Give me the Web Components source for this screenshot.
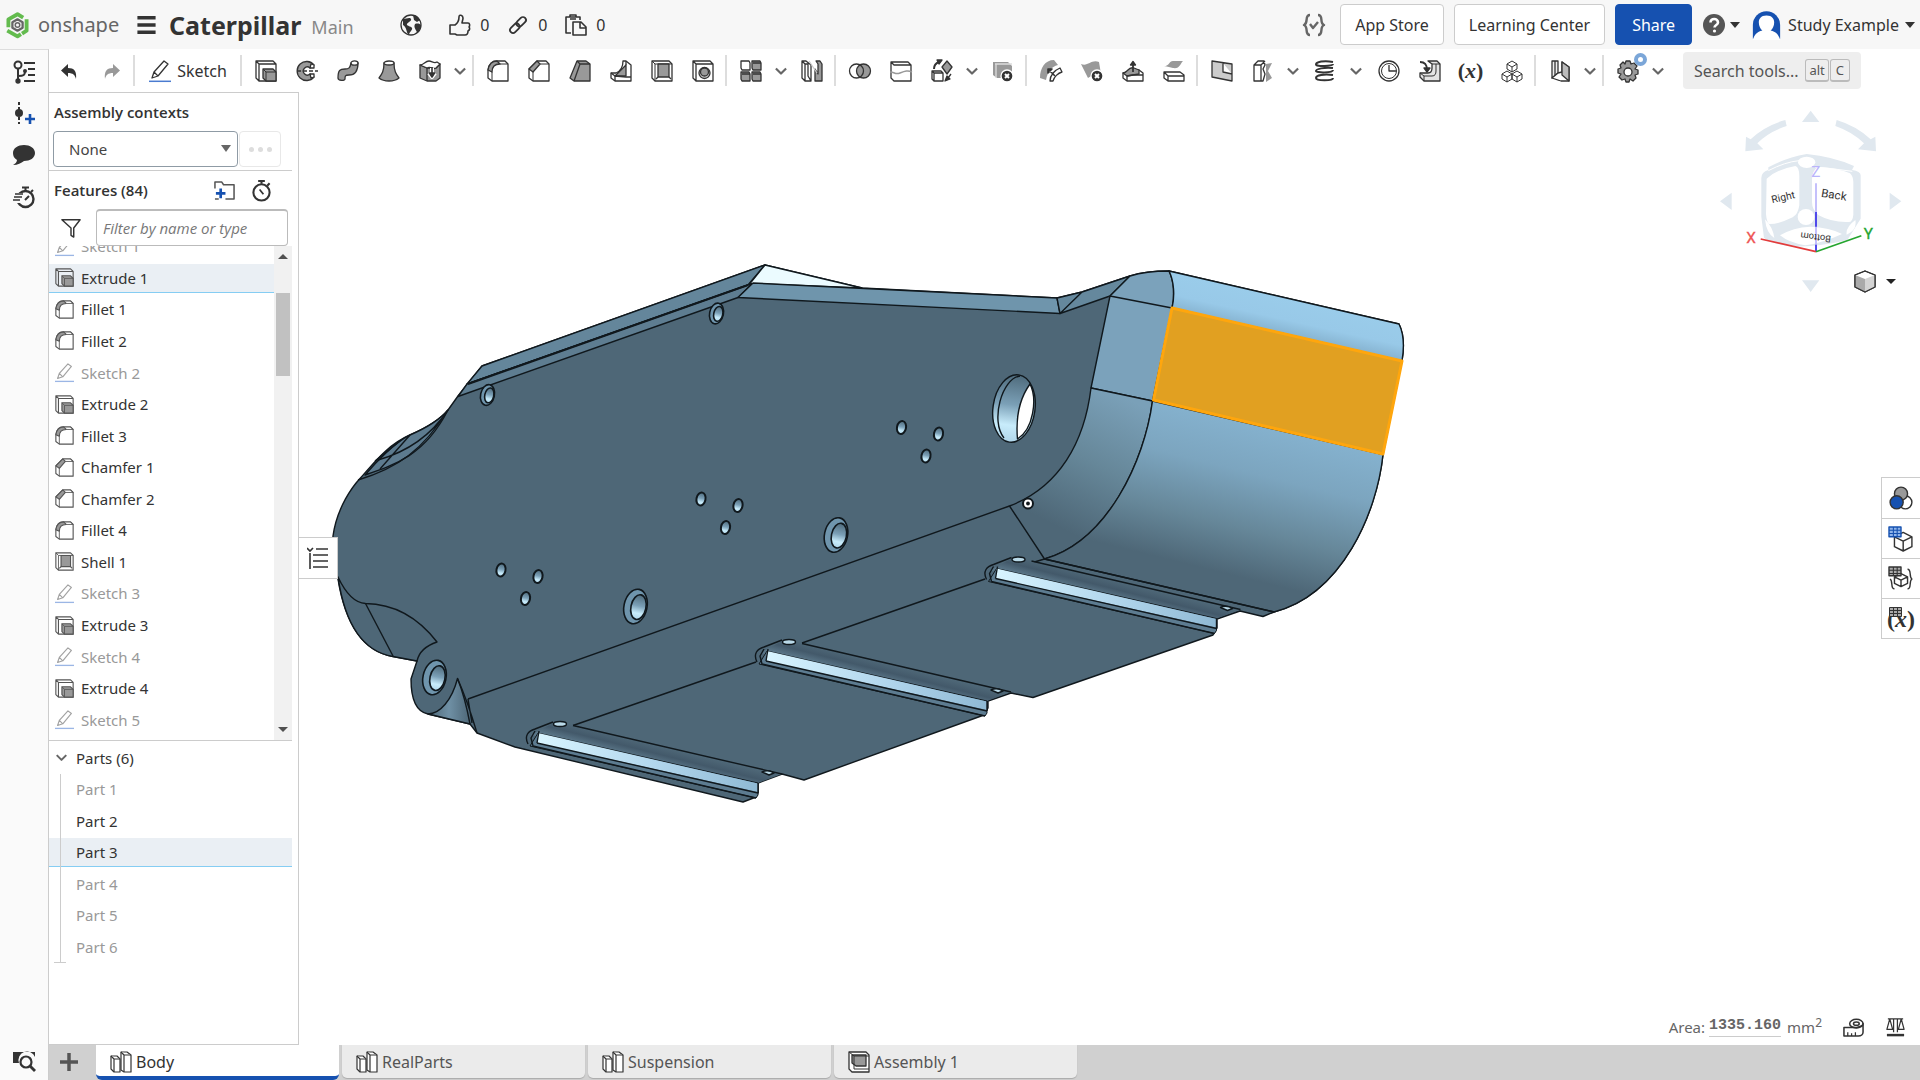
<!DOCTYPE html>
<html lang="en">
<head>
<meta charset="utf-8">
<title>Caterpillar | Main</title>
<style>
html,body{margin:0;height:100%}
body{font:16px/20px "Noto Sans","Open Sans",sans-serif;color:#333;background:#fff;overflow:hidden}
</style>
</head>
<body>
<cad-app></cad-app>
<script>
const G='#999',D='#333';
const ICONS={
undo:`<path d="M9 4v4c6 0 9 3 8 11-1-4-3-6-8-6v4L2 10.500z" fill="${D}" stroke="none"/>`,
redo:`<path d="M13 4v4c-6 0-9 3-8 11 1-4 3-6 8-6v4l7-6.500z" fill="${G}" stroke="none"/>`,
sketch:`<path d="M3 18l2-6L15 1l4 3L9 16zM5 12l4 4"/><path d="M0 21.300h22" stroke="#4a7bd0" stroke-width="1.500"/>`,
extrude:`<path d="M1 1h17l3 3v17H4l-3-3zM1 1l3 3h17M4 4v17"/><path d="M8 9h10l3 3v9H11l-3-3z" fill="${G}"/><path d="M8 9l3 3h10M11 12v9" stroke-width="1"/>`,
revolve:`<path d="M18 5A9.500 9.500 0 1 0 18 17L14 14A4 4 0 1 1 14 8z" fill="${G}"/><path d="M14 8l1-4 3 1v3zM14 14l1 4 3-1v-3z" fill="#fff"/><path d="M1 11h21" stroke-dasharray="4 2"/>`,
sweep:`<path d="M1 18c0-8 2-9 7-9 4 0 5-1 6-6h7c0 8-3 12-9 12-4 0-4 1-4 4 0 2-7 2-7-1z" fill="${G}"/><ellipse cx="17.500" cy="3" rx="3.500" ry="2.200" fill="#fff"/>`,
loft:`<path d="M6 3c0 8-2 11-5 15 5 4 15 4 20 0-3-4-5-7-5-15z" fill="${G}"/><ellipse cx="11" cy="3" rx="5" ry="2" fill="#fff"/>`,
thicken:`<path d="M1 5v13l7 3h9l4-3V4l-4 4H8z" fill="${G}"/><path d="M1 5c4 0 5-4 9-4 3 0 5 3 8 1l3 2-4 4c-3 2-5-2-9 0z" fill="#fff"/><path d="M8 8v13"/><path d="M13 8v8M10 13l3 4 3-4" stroke="#fff" stroke-width="4"/><path d="M13 7v9M10.500 13l2.500 4 2.500-4z" fill="${D}" stroke-width="1.600"/>`,
fillet:`<path d="M1 10C2 4 5 1 10 1h8l3 3v17H5l-4-3z"/><path d="M1 10c1-6 4-9 9-9l3 3c-5 0-8 3-8 8z" fill="${G}"/><path d="M13 4h8M5 12v9M18 1l3 3" stroke-width="1"/>`,
chamfer:`<path d="M1 9l8-8h9l3 3v17H5l-4-3z"/><path d="M1 9l8-8 3 3-7 8z" fill="${G}"/><path d="M12 4h9M5 12v9M18 1l3 3" stroke-width="1"/>`,
draft:`<path d="M8 1h9l4 3v17H5l-4-3z" fill="${G}"/><path d="M8 1l3 3h10M11 4L5 21"/>`,
rib:`<path d="M16 1l5 4v16H5l-4-3 0-5 5 0C11 11 13 7 13 1z" fill="#fff"/><path d="M5 16L16 5v11z" fill="${G}"/><path d="M1 13l4 3v5M5 16l11 1h5M16 5V1"/>`,
shell:`<path d="M1 1h17l3 3v17H4l-3-3z"/><path d="M1 1l3 3v17M4 4h17" stroke-width="1"/><path d="M7 4h11v13H7z" fill="${G}"/><path d="M7 17l-2 2M18 17l2 2"/>`,
hole:`<path d="M1 1h17l3 3v17H4l-3-3zM1 1l3 3h17M4 4v17"/><circle cx="12.500" cy="13" r="5.500" fill="#ccc"/><circle cx="12.500" cy="12" r="4" fill="${G}"/>`,
pattern:`<path d="M1 1h8l1 2v7H2l-1-2z"/><g fill="${G}"><path d="M12 1h8l1 2v7h-8l-1-2zM1 12h8l1 2v7H2l-1-2zM12 12h8l1 2v7h-8l-1-2z"/></g><path d="M13 3h8M2 14h8M13 14h8"/>`,
mirror:`<path d="M1 1h4l5 4v16H4l-3-3zM1 1l3 3v17M4 4h3v12l3 5"/><path d="M14 21V9l3 5V4l-2-3h4l2 3v17z" fill="${G}"/><path d="M8 1l8 12" stroke="#ccc"/>`,
boolean:`<circle cx="14.500" cy="11" r="7" fill="${G}"/><circle cx="7.500" cy="11" r="7"/>`,
split:`<path d="M1 2h17l3 3v16H4l-3-3zM1 2l3 3h17"/><path d="M0 12c5 0 5 3 10 1s8-3 12-1" stroke="${G}" stroke-width="1.500"/>`,
transform:`<path d="M1 11h9l2 2v8H3l-2-2zM1 11l2 2h9M3 13v8"/><path d="M16 1l5 6-5 7-5-7z" fill="${G}"/><path d="M3 9c0-4 2-6 5-7" stroke-width="2"/><path d="M6 0l5 0-3 4zM14 21l2-5 3 3zM20 14l-3 4" fill="${D}"/>`,
delpart:`<path d="M1 2h15l4 4v12H5l-4-3z" fill="${G}" stroke="none"/><path d="M3 4h17M4 4v14" stroke="#ddd"/><circle cx="15" cy="16" r="6" fill="${D}" stroke="#fff"/><path d="M13 14l4 4M17 14l-4 4" stroke="#fff" stroke-width="2"/>`,
modfillet:`<path d="M0 18C0 8 5 0 14 0l4 5C11 7 8 11 6 20z" fill="${G}" stroke="none"/><path d="M10 21c0-6 5-11 10-13l2 4c-4 1-8 5-9 9z" fill="#fff"/><path d="M15 16L9 10M8 13V9h4z" fill="${D}" stroke-width="1.600"/>`,
delface:`<path d="M0 4c7 3 10-5 18-2l2 12c-6-1-9 2-13 4z" fill="${G}" stroke="none"/><circle cx="16" cy="16" r="6" fill="${D}" stroke="#fff"/><path d="M14 14l4 4M18 14l-4 4" stroke="#fff" stroke-width="2"/>`,
moveface:`<path d="M1 13v5l4 3h16v-8l-4-3H9z"/><path d="M1 13c5 0 5-7 11-5l5 2 0 4-12 2z" fill="${G}"/><path d="M5 16v5M5 16l6-1h10"/><path d="M11 12V4" stroke-width="1.800"/><path d="M8.500 5L11 1.500 13.500 5z" fill="${D}"/>`,
replace:`<path d="M1 12h16l4 3v6H5l-4-3zM1 12l4 4h16M5 16v5"/><path d="M1 6c6 0 5-6 10-5l9 0c-3 3-3 8-10 7-3-1-5-1-9-2z" fill="${G}" stroke="none"/>`,
plane:`<path d="M1 1l20 3v17L1 17zM12 3v9l9 2" fill="#ccc"/>`,
surface:`<path d="M2 5l4-4h6l1 4-2 4 2 5-2 7H2zM2 5h7l4-4M9 5v16"/><path d="M14 4l6-1-4 8 4 7-6 4z" fill="${G}" stroke="none"/>`,
helix:`<path d="M20 2C11 0 3 2 3 4.500S20 6 20 4M20 8C11 7 3 9 3 11s17 2 17-1M20 15c-9-1-17 0-17 3s17 3 17 0" stroke-width="2"/>`,
curve:`<circle cx="11" cy="11" r="10"/><circle cx="11" cy="11" r="7.500" stroke-width="1"/><path d="M11 5v6h7" />`,
derive:`<path d="M9 1h9l3 3v17H5l-4-4v-4h8c3 0 4-2 4-5V4z" fill="#e4e4e4"/><path d="M13 4h8M1 13l4 3h8c3 0 4-2 4-5V4M5 16v5" stroke-width="1"/><path d="M1 2c5 0 7 3 7 8" stroke-width="1.800"/><path d="M5 8l3 4 3-4z" fill="${D}"/>`,
cubes:`<path d="M11 1l5 3v5l-5 3-5-3V4zM6 4l5 3 5-3M11 7v5M6 11l5 3v5l-5 3-5-3v-5zM1 14l5 3 5-3M6 17v5M16 11l5 3v5l-5 3-5-3v-5zM11 14l5 3 5-3M16 17v5" stroke-width="1"/>`,
sheet:`<path d="M3 1h6v12l-6 5z" fill="#eee"/><path d="M6 1v15"/><path d="M3 18l6-5 4-1V2l7 5v14h-8z" fill="#fff"/><path d="M13 2l7 5v14l-7-6z" fill="#bbb"/>`,
gear:`<path d="M9 1h4l1 3 3-1 3 3-2 3 3 1v4l-3 1 1 3-3 3-3-2-1 3H9l-1-3-3 1-3-3 2-3-3-1v-4l3-1-1-3 3-3 2 2z" fill="${G}"/><circle cx="11" cy="12" r="4" fill="#fff"/>`,
globe:`<circle cx="11" cy="11" r="10"/><path d="M3 5c3 0 7-2 8 0s-3 3-4 5 4 2 5 4-3 4-3 7C6 19 7 13 3 11zM13 1c4 0 6 3 7 5l-3 2-3-2zM15 10c3-1 5 0 6 1 0 4-2 6-4 8 0-3-4-5-2-9z" fill="${D}" stroke="none"/>`,
thumb:`<path d="M1 11h5c3-2 4-5 4-8 0-3 4-2 4 1 0 2-1 4-1 5h6c2 0 2 3 1 4 1 1 1 3-1 4 0 3-1 4-3 4H8l-2-1H1z" stroke-width="1.600"/>`,
link:`<g transform="rotate(45 11 11)" stroke-width="1.800"><rect x="8" y="1" width="6" height="11" rx="3"/><rect x="8" y="10" width="6" height="11" rx="3"/></g>`,
clip:`<path d="M6 19H1V3h14v3M5 3V1h6v2M5 5h6" stroke-width="1.600"/><path d="M8 8h8l5 5v8H8zM15 8v6h6" stroke-width="1.600"/>`,
braces:`<g stroke="#666" stroke-width="2.400"><path d="M7 1C1 1 6 9 1 11c5 2 0 10 6 10M15 1c6 0 1 8 6 10-5 2 0 10-6 10"/><path d="M7 10l3 4 5-6"/></g>`,
help:`<circle cx="11" cy="11" r="11" fill="#555" stroke="none"/><path d="M7.500 8.500c0-5 7.500-4.500 7.500 0 0 2.500-3.500 2.500-3.500 5" stroke="#fff" stroke-width="2.600"/><circle cx="11.500" cy="17" r="1.600" fill="#fff" stroke="none"/>`,
user:`<path d="M1 21V11a10 10 0 0 1 20 0v10z" fill="#1651b0" stroke="none"/><path d="M11 4c8 0 6 9 3 11 4 1 6 3 7 7H1c1-4 3-6 7-7-3-2-5-11 3-11z" fill="#fff" stroke="none"/>`,
tree:`<circle cx="5" cy="4" r="3.500" stroke-width="2"/><path d="M5 8v12M5 15c6 0 7-1 7-5M11 2h11M15 8h7M15 14h7M11 20h11" stroke-width="2"/><circle cx="5" cy="20" r="2" fill="${D}"/><circle cx="12" cy="10" r="2" fill="${D}" stroke="none"/>`,
version:`<path d="M6 0v22" stroke-width="2" stroke-dasharray="3 2"/><circle cx="6" cy="11" r="4" fill="${D}" stroke="none"/><path d="M17 12v10M12 17h10" stroke="#1651b0" stroke-width="2.600"/>`,
comment:`<path d="M11 1c6 0 11 3 11 8s-5 8-11 8c-3 2-6 4-11 4 2-1 4-3 4-5-3-2-4-4-4-7 0-5 5-8 11-8z" fill="${D}" stroke="none"/>`,
perf:`<circle cx="12.500" cy="13" r="8" stroke-width="2.400"/><path d="M12.500 5V1M9 1.500h7M18 6l2-2M12 14l4-4" stroke-width="2"/><path d="M3 7h6v10H1v-8z" fill="#fafafa" stroke="none"/><path d="M2 8h8M1 11h8M0 14h7" stroke-width="1.400"/>`,
timer:`<circle cx="11" cy="13" r="8.500" stroke-width="2.200"/><path d="M11 4V1M7.500 1h7M17 6l2.500-2.500" stroke-width="2.200"/><path d="M9 10l4 5" stroke-width="1.800"/>`,
folder:`<path d="M1 9V2h7l2 3h11v15H12M1 20h4" stroke="#555" stroke-width="1.600"/><path d="M7 9v10M2 14h10" stroke="#1651b0" stroke-width="2.800"/>`,
funnel:`<path d="M1 2h20l-7 9v10l-3-2v-8z" stroke-width="1.600"/>`,
zoomsheet:`<path d="M0 1h22v5A8 8 0 0 0 6 12H0z" fill="${D}" stroke="none"/><circle cx="13" cy="11" r="5.500" stroke-width="2.200" fill="#fafafa"/><path d="M17 15l5 5" stroke-width="2.800"/>`,
plus:`<path d="M11 2v18M2 11h18" stroke="#555" stroke-width="3.500"/>`,
part:`<g fill="#fff" stroke-width="1.200"><path d="M1 5h6l3 3v13H4l-3-3z"/><path d="M1 5l3 3h6M4 8v13"/><path d="M11 1h6l4 3v17h-7l-3-2z"/><path d="M11 1l3 3h7M14 4v17"/></g>`,
asm:`<path d="M1 1h17l3 3v17H4l-3-3z" fill="#fff"/><path d="M4 4h14v11H8l-4-3z" fill="${G}"/><path d="M1 1l5 4M6 5v13h15M6 5h15" stroke-width="1"/>`,
tape:`<path d="M1 12h13c3 0 7-2 7-4v9c0 2-2 4-5 4H1z" stroke-width="1.600"/><ellipse cx="14" cy="8" rx="7" ry="4.500" stroke-width="1.600"/><ellipse cx="14" cy="8" rx="3" ry="1.800" stroke-width="1.600"/><path d="M5 21v-4M9 21v-3M13 21v-4"/>`,
scale:`<path d="M3 3h16M9 3v14M13 3v14M5 3L2 14h6zM17 3l-3 11h6z" stroke-width="1.300"/><path d="M2 20h18" stroke-width="2.600"/>`,
logo:`<g stroke="#63bb4e" stroke-width="3.400"><path d="M3 13V6l8-4.500 5 3M19 6v10l-4 2.500M2 16l9 5 3-2"/></g><path d="M11 6l4.500 2.500v5L11 16l-4.500-2.500v-5z" stroke="#666" stroke-width="2"/><circle cx="11" cy="11" r="2" stroke="#666"/>`,
menu:`<path d="M1 3h20M1 11h20M1 19h20" stroke-width="4"/>`,
chev:`<path d="M4 7.500l7 7 7-7" stroke="#666" stroke-width="3"/>`,
appear:`<circle cx="15" cy="15" r="6" fill="#fff"/><circle cx="11" cy="7" r="6" fill="${G}"/><circle cx="7" cy="15" r="6" fill="#1651b0"/>`,
cfgcube:`<path d="M13 5l8 4v9l-8 4-8-4V9zM5 9l8 4 8-4M13 13v9"/><path d="M0 0h11v9H0z" fill="#8fb4ea" stroke="#1651b0"/><path d="M4 0v9M7.500 0v9M0 3h11M0 6h11" stroke="#1651b0" stroke-width="1"/>`,
cfgbrace:`<path d="M11 6l6 3v6l-6 3-6-3V9zM5 9l6 3 6-3M11 12v6M5 20c-4 0-1-7-4-9M17 2c4 0 1 7 4 9-3 2 0 9-4 9"/><path d="M0 0h11v8H0z" fill="#aaa"/><path d="M4 0v8M7.500 0v8M0 3h11M0 6h11" stroke-width="1"/>`,
cube:`<path d="M1 5l10-4 10 4v12l-10 5-10-5z" fill="#fff"/><path d="M1 5l10 4v13L1 17z" fill="#aaa" stroke="none"/><path d="M11 9l10-4v12l-10 5z" fill="#d4d4d4" stroke="none"/><path d="M1 5l10-4 10 4v12l-10 5-10-5z"/>`
};
const define=(tag,css,html)=>customElements.define(tag,class extends HTMLElement{
  constructor(){super();const t=document.createElement('template');
    t.innerHTML=`<style>*{box-sizing:border-box}button,a{font:inherit;color:inherit;background:none;border:0;padding:0;text-decoration:none;display:flex;align-items:center;justify-content:center}${css}</style>${typeof html==='function'?html(this):html}`;
    this.attachShadow({mode:'open'}).append(t.content.cloneNode(true));}
});
define('cad-icon',`:host{display:block;width:22px;height:22px;flex:none}svg{display:block;width:100%;height:100%;overflow:visible;stroke:var(--ink,#333)}`,
 e=>`<svg viewBox="0 0 22 22" fill="none" stroke-width="1.300" stroke-linejoin="round" aria-hidden="true">${ICONS[e.getAttribute('name')]||''}</svg>`);
define('cad-tool',`:host{display:block;flex:none}button{width:41px;height:40px}`,
 e=>`<button type="button" aria-label="${e.getAttribute('name')||'tool'}">${e.getAttribute('name')?`<cad-icon name="${e.getAttribute('name')}"></cad-icon>`:'<slot></slot>'}</button>`);
define('cad-more',`:host{display:block;flex:none}button{width:20px;height:40px}:host([wide]) button{width:24px}cad-icon{width:16px;height:16px}`,`<button type="button" aria-label="more"><cad-icon name="chev"></cad-icon></button>`);
define('cad-sep',`:host{display:block;flex:none;width:2px;height:31px;margin:0 3px 0 2px;background:#ddd}`,``);

define('cad-header',`
:host{display:flex;align-items:center;height:49px;background:#f7f7f7;padding:0 5px}
.logo{display:flex;align-items:center;justify-content:flex-start;gap:8px;width:131px;font:20px/24px "Noto Sans",sans-serif;color:#666}
.logo cad-icon{width:25px;height:26px}
.menu cad-icon{width:21px;height:20px}
h1{margin:0 10px 0 12px;font:bold 25px/32px "Noto Sans",sans-serif}
.main{font-size:18px;color:#888;width:89px;padding-top:4px}
.stat{display:flex;align-items:center;gap:9px;width:58px}
.globe{margin-right:27px}.grow{flex:1}
.brace{margin-right:5px}
.btn{height:41px;border:1px solid #ccc;border-radius:4px;background:#fff;margin-left:10px;padding:0 14px}
.share{background:#1651b0;border-color:#1651b0;color:#fff;padding:0 16px}
.caret{border:5px solid transparent;border-top:6px solid #333;border-bottom:0}
.help{gap:5px;margin:0 11px}.user{gap:6px}.user cad-icon{width:31px;height:30px}
`,`
<a class="logo" href="#"><cad-icon name="logo"></cad-icon>onshape</a>
<button class="menu" aria-label="Menu"><cad-icon name="menu"></cad-icon></button>
<h1>Caterpillar</h1><span class="main">Main</span>
<cad-icon name="globe" class="globe"></cad-icon>
<span class="stat"><cad-icon name="thumb"></cad-icon>0</span>
<span class="stat"><cad-icon name="link"></cad-icon>0</span>
<span class="stat"><cad-icon name="clip"></cad-icon>0</span>
<span class="grow"></span>
<cad-icon name="braces" class="brace"></cad-icon>
<button class="btn">App Store</button><button class="btn">Learning Center</button><button class="btn share">Share</button>
<button class="help" aria-label="Help"><cad-icon name="help"></cad-icon><i class="caret"></i></button>
<button class="user"><cad-icon name="user"></cad-icon>Study Example<i class="caret"></i></button>`);

const tools=s=>s.split(' ').map(n=>n==='|'?'<cad-sep></cad-sep>':n==='v'?'<cad-more></cad-more>':n==='w'?'<cad-more wide></cad-more>':n==='x'?'<cad-tool><b>(<i>x</i>)</b></cad-tool>':`<cad-tool name="${n}"></cad-tool>`).join('');
define('cad-toolbar',`
:host{display:flex;align-items:center;height:43px;background:#fff}
b{font:bold 22px/22px "Liberation Serif",serif}
.sk{gap:6px;width:100px;height:40px}
.gear{position:relative}.gear i{position:absolute;right:1px;top:2px;width:13px;height:13px;border-radius:50%;border:4px solid #7ba6d8;background:#fff}
.search{display:flex;align-items:center;gap:1px;height:37px;width:178px;margin-left:15px;padding:0 11px;background:#eee;border-radius:4px}
.search input{font:inherit;border:0;background:none;padding:0;min-width:0;flex:1}
.search input::placeholder{color:#555;opacity:1}
kbd{font:13px/20px "Noto Sans",sans-serif;color:#555;border:1px solid #bbb;border-bottom-width:2px;border-radius:3px;padding:0 3px}
kbd+kbd{padding:0 5px}
`,`${tools('undo redo |')}<button class="sk"><cad-icon name="sketch"></cad-icon>Sketch</button>${tools('| extrude revolve sweep loft thicken v | fillet chamfer draft rib shell hole | pattern v mirror | boolean split transform v delpart | modfillet delface moveface replace | plane surface v helix w curve derive x cubes | sheet v |')}<span class="gear"><cad-tool name="gear"></cad-tool><i></i></span><cad-more></cad-more>
<label class="search"><input placeholder="Search tools..." aria-label="Search tools"><kbd>alt</kbd><kbd>C</kbd></label>`);

define('cad-rail',`
:host{display:flex;flex-direction:column;align-items:center;width:49px;background:#fafafa;border-right:1px solid #ccc;border-top:1px solid #ddd;padding:10px 0 4px}
button{width:40px;height:42px}.last{margin-top:auto;height:28px}
.first{height:24px;margin-bottom:8px}`,`
<button class="first" aria-label="Features"><cad-icon name="tree"></cad-icon></button>
<button aria-label="Versions"><cad-icon name="version"></cad-icon></button>
<button aria-label="Comments"><cad-icon name="comment"></cad-icon></button>
<button aria-label="Performance"><cad-icon name="perf"></cad-icon></button>
<button class="last" aria-label="Search"><cad-icon name="zoomsheet"></cad-icon></button>`);

define('cad-feature',`
:host{display:flex;align-items:center;min-height:0}
div{flex:1;display:flex;align-items:center;gap:7px;height:29px;padding-left:6px;border-bottom:1px solid transparent}
cad-icon{width:19px;height:19px;--ink:#555}
:host([off]) div{color:#999}:host([off]) cad-icon{opacity:.55}
:host([on]) div{background:#eaeff4;border-color:#85cdf3}`,
 e=>`<div><cad-icon name="${e.getAttribute('icon')}"></cad-icon><slot></slot></div>`);
define('cad-part',`
:host{display:flex;align-items:center}
div{flex:1;height:29px;line-height:28px;padding-left:27px;border-bottom:1px solid transparent}
:host([off]) div{color:#999}
:host([on]) div{background:#eaeff4;border-color:#85cdf3}`,`<div><slot></slot></div>`);
const feats=['sketch|Sketch 1','extrude|Extrude 1','fillet|Fillet 1','fillet|Fillet 2','sketch|Sketch 2','extrude|Extrude 2','fillet|Fillet 3','chamfer|Chamfer 1','chamfer|Chamfer 2','fillet|Fillet 4','shell|Shell 1','sketch|Sketch 3','extrude|Extrude 3','sketch|Sketch 4','extrude|Extrude 4','sketch|Sketch 5'];
define('cad-features',`
:host{display:flex;flex-direction:column;width:250px;border:1px solid #ccc;border-left:0;background:#fff;padding-right:6px;font-size:15px}
h2{margin:0;font:600 15px/20px "Open Sans",sans-serif;padding-left:5px}
.ctx h2{padding-top:9px;height:38px}
.pick{display:flex;gap:1px;padding:0 0 2px 4px;height:40px;border-bottom:1px solid #ccc}
.sel{position:relative;width:185px;height:36px}
select{appearance:none;width:100%;height:100%;border:1px solid #8f9ba5;border-radius:4px;background:#fff;font:inherit;color:#444;padding:0 15px}
.sel i{position:absolute;right:7px;top:14px;border:5px solid transparent;border-top:7px solid #666;border-bottom:0}
.dots{width:42px;height:36px;border:1px solid #e8e8e8;border-radius:4px;gap:4px}
.dots i{width:5px;height:5px;border-radius:50%;background:#ddd}
.fh{display:flex;align-items:center;height:38px;gap:16px;padding-right:20px}.fh h2{flex:1}
.fh cad-icon{width:21px;height:21px}
.filt{display:flex;align-items:center;gap:15px;padding:0 4px 0 12px;height:37px}
.filt cad-icon{width:20px;height:20px}
input{flex:1;min-width:0;height:37px;border:1px solid #bbb;border-top-width:2px;border-radius:4px;padding:0 6px;font:italic 15px/20px "Open Sans",sans-serif}
input::placeholder{color:#777;opacity:1}
.list{display:flex;height:495px;overflow:hidden;border-bottom:1px solid #ccc}
.rows{flex:1;display:grid;grid-auto-rows:1fr;margin:-15px 0 4px}
.bar{width:18px;background:#f1f1f1;display:flex;flex-direction:column;align-items:center;padding:8px 0}
.up,.dn{border:5px solid transparent}.up{border-bottom-color:#505050;border-top:0}.dn{border-top-color:#505050;border-bottom:0;margin-top:auto}
.thumb{width:14px;height:83px;background:#c1c1c1;margin-top:34px}
.ph{display:flex;align-items:center;gap:7px;height:33px;padding-left:5px}.ph cad-icon{width:15px;height:15px}
.tree{display:grid;grid-template-rows:repeat(6,1fr);height:189px;position:relative}
.tree::after{content:"";position:absolute;left:5px;top:0;width:12px;height:100%;background:linear-gradient(#ccc,#ccc) 6px 0/1px 100% no-repeat,linear-gradient(#ccc,#ccc) 0 100%/12px 1px no-repeat}
`,`
<div class="ctx"><h2>Assembly contexts</h2>
<div class="pick"><div class="sel"><select aria-label="Assembly contexts"><option>None</option></select><i></i></div><button class="dots" aria-label="More"><i></i><i></i><i></i></button></div></div>
<div class="fh"><h2>Features (84)</h2><cad-icon name="folder"></cad-icon><cad-icon name="timer"></cad-icon></div>
<div class="filt"><cad-icon name="funnel"></cad-icon><input placeholder="Filter by name or type" aria-label="Filter"></div>
<div class="list"><div class="rows">${feats.map((f,i)=>{const[a,b]=f.split('|');return `<cad-feature icon="${a}"${a==='sketch'?' off':''}${i===1?' on':''}>${b}</cad-feature>`}).join('')}</div>
<div class="bar"><i class="up"></i><i class="thumb"></i><i class="dn"></i></div></div>
<div class="ph"><cad-icon name="chev"></cad-icon>Parts (6)</div>
<div class="tree">${[1,2,3,4,5,6].map(n=>`<cad-part${n===2?'':n===3?' on':' off'}>Part ${n}</cad-part>`).join('')}</div>`);

const tri=(x,y)=>[[0,0],[37,6.5],[24.5,28.5]].map(([a,b])=>`<ellipse rx="4.500" ry="6.500" transform="translate(${x+a} ${y+b}) rotate(12)" fill="url(#hg)" stroke-width="2"/>`).join('');
const bore=(x,y,k=1)=>`<g transform="translate(${x} ${y}) rotate(12)" stroke-width="1.600"><ellipse rx="${11.5*k}" ry="${17.5*k}" fill="#6f95ad"/><ellipse cx="${3*k}" rx="${7.5*k}" ry="${12.5*k}" fill="url(#hg)"/></g>`;
const rib=(x,y)=>`<g transform="translate(${x} ${y})"><path d="M531 735l22-12 17-1 3 4 209 48-24 9z" fill="url(#rs)" stroke="none"/><path d="M538 733L758 783v12l-2 3L530 746z" fill="#5d7c91" stroke-width="1"/><path d="M538 733L758 783.500V792L537 743z" fill="url(#rb)" stroke="none"/><path d="M528 744c-4-8 0-13 7-15l18-7M537 743l221 50M533 746l223 52M539 731l-2 12M535 731l-4 7 2 8M573 725.500L782 774M758 783v10"/><ellipse cx="560" cy="724" rx="6.500" ry="2.500" fill="#b9d9e8"/><path d="M762 772q6-3 12 1l-5 2z" fill="#b9d9e8"/></g>`;
define('cad-canvas',`
:host{display:block;position:relative;flex:1;min-width:0;overflow:hidden;background:#fff}
.model{display:block;width:100%;height:100%}
.handle{position:absolute;left:-1px;top:445px;width:40px;height:42px;background:#fff;border:1px solid #ccc;border-left:0}
.handle svg{width:22px;height:22px}
.cube{position:absolute;right:0;top:0;width:220px;height:217px}
.iso{position:absolute;right:24px;top:178px;gap:10px}.iso i{border:5px solid transparent;border-top:5px solid #222;border-bottom:0}
.side{position:absolute;right:0;top:385px;width:39px;border:1px solid #ccc;border-right:0;background:#fff}
.side button{width:38px;height:40px}.side button+button{border-top:1px solid #ccc}
.side cad-icon{width:24px;height:24px}
.vx{display:grid;place-items:center}
.vx>*{grid-area:1/1}.vx b{font:bold 24px/24px "Liberation Serif",serif}.vx svg{width:24px;height:24px}
.area{position:absolute;right:14px;bottom:8px;display:flex;align-items:center;color:#666;font-size:15px}
.area u{font:bold 15px/20px "Liberation Mono",monospace;text-decoration:none;border-bottom:1px solid #ccc;margin:0 6px 0 4px}
.area sup{font-size:12px;line-height:0}.area cad-icon{width:21px;height:21px;margin-left:21px}
`,`
<svg class="model" viewBox="299 92 1621 953" preserveAspectRatio="xMinYMin meet" stroke="#10181d" stroke-width="1.400" stroke-linejoin="round" fill="none">
<defs>
<linearGradient id="hg" x1="0" y1="0" x2="0" y2="1"><stop stop-color="#4e6a7b"/><stop offset=".45" stop-color="#7ba0b7"/><stop offset=".75" stop-color="#c8ecfb"/><stop offset="1" stop-color="#b0d6ea"/></linearGradient>
<linearGradient id="rb" gradientUnits="userSpaceOnUse" x1="540" y1="735" x2="758" y2="788"><stop stop-color="#d8f4ff"/><stop offset=".5" stop-color="#b4d8ee"/><stop offset="1" stop-color="#8fb9d4"/></linearGradient>
<linearGradient id="rs" gradientUnits="userSpaceOnUse" x1="660" y1="746" x2="656" y2="762"><stop stop-color="#4e6777"/><stop offset=".5" stop-color="#43596a"/><stop offset="1" stop-color="#5b7789"/></linearGradient>
<linearGradient id="dk" gradientUnits="userSpaceOnUse" x1="1270" y1="420" x2="1232" y2="575"><stop stop-color="#86b3d0"/><stop offset=".35" stop-color="#7ca5bf"/><stop offset=".7" stop-color="#668799"/><stop offset="1" stop-color="#4e6777"/></linearGradient>
<linearGradient id="sd" gradientUnits="userSpaceOnUse" x1="1120" y1="395" x2="1055" y2="525"><stop stop-color="#7aa0b8"/><stop offset=".5" stop-color="#668799"/><stop offset="1" stop-color="#4e6777"/></linearGradient>
<linearGradient id="tp" gradientUnits="userSpaceOnUse" x1="1290" y1="298" x2="1282" y2="334"><stop stop-color="#9accea"/><stop offset=".6" stop-color="#98c9e8"/><stop offset="1" stop-color="#86b3d0"/></linearGradient>
<linearGradient id="cn"><stop stop-color="#4e6777"/><stop offset=".5" stop-color="#6f90a5"/><stop offset="1" stop-color="#4e6777"/></linearGradient>
</defs>
<path fill="#4e6777" d="M482 366L765 265l97 23L1057 298l25-6 48-16q16-5 39-5L1399 324c5 10 5 25 3 37L1383 454.500c-6 58-41 140-109 157.500l-11 4.500-23-5.500-23 8v9l-4 7L1033 697.500 1011 693l-23 8v7l-4 7L804 780l-22-6-24 9v10l-2 4-13 5L515 747l-38-14-7-9-42-10c-16-3-17-25-17-35l6-18-24-4.500C353 650 342 604 338 579q-6-24-5-43c4-29 20-50 27-57.500C373 464 387 445 410 435s33-19 38-25l10-14z"/>
<path fill="#64869b" d="M482 366L765 265l-17 20-281 99z"/>
<path fill="#5e7d91" d="M467 384L748 285l5-2-15 14.500-280 99z"/>
<path d="M468 384L748 285" stroke-width="2"/>
<path fill="#ebfbff" d="M765 265l-15 18.500 112 4.500z"/>
<path fill="#6f95ac" d="M753 283l304 15 3 15.500L738 297.500z"/>
<path fill="#65889d" d="M1057 298l25-6-22 21.500zM1082 292l48-16-20 20-50 17.500z"/>
<path fill="#7ba2bb" d="M1130 276q16-5 39-5c5 10 6 25 3 37l-62-12zM1110 296l62 12-19.500 93-61.500-13z"/>
<path fill="url(#sd)" d="M1091 388l61.500 13c-8 60-45 140-108 158l-35-53c50-19 75-64 81.500-118z"/>
<path fill="url(#tp)" d="M1169 271L1399 324c5 10 5 25 3 37L1172 308c3-12 2-27-3-37z"/>
<path fill="url(#dk)" d="M1152.500 401L1383 454.500c-6 58-41 140-109 157.500L1044.500 559c63-18 100-98 108-158z"/>
<path fill="#e1a021" stroke="#ffa60d" stroke-width="3" d="M1172 308L1402 361 1383 454 1153.500 400z"/>
<path d="M468 699L1009.500 506M573 725.500L756 662M802 643L985 579M1031 563l13.500-4 229.500 53"/>
${rib(0,0)}${rib(229,-82)}${rib(458.5,-164.5)}
${tri(501,570)}${tri(701,499)}${tri(901.5,427.5)}
${bore(635.5,606.5)}${bore(836,535)}${bore(434.500,677.500)}${bore(487.500,395,.6)}${bore(716.500,313.500,.6)}
<ellipse rx="21" ry="34" transform="translate(1014 408.500) rotate(8)" fill="url(#hg)"/>
<path fill="#fff" d="M1030 384c-13 18-14 38-12.500 55 16-10 20-40 12.500-55z"/><path d="M1020 376c-18 2-30 45-16 62"/>
<path fill="#4e6777" d="M338 577c8 17 18 26 27.500 26.500C396 604 420 620 437 642c-12 4-18 10-20 19l-24-4.500C353 650 342 604 338 577z"/><path d="M365.500 603.500L393 656"/>
<path fill="url(#cn)" d="M457.500 678.500C452 700 440 714 428 714l42 10c-3-16-7-32-12.500-45.500z"/><path d="M457.500 678.500c8 18 14 36 19.500 54.500M468 699l4 24"/>
<path fill="#5d7b8f" d="M448 410c-5 6-15 15-38 25-15 7-35 28-45 40 30-10 60-20 83-65z"/><path d="M448 410c-25 40-50 58-90 70M448 410c-20 30-45 43-70 50M410 435l-30 34M400 441l-25 20"/>
<circle cx="1028" cy="503.500" r="5" fill="#fff" stroke-width="2"/><circle cx="1028" cy="503.500" r="1.200" fill="#111"/>
</svg>
<button class="handle" aria-label="Toggle features"><svg viewBox="0 0 22 22" fill="none" stroke="#333" stroke-width="1.600"><path d="M0 1l3 3 3-3M3 6v16M9 2h12M6 8h15M6 14h15M6 20h15"/></svg></button>
<svg class="cube" viewBox="0 6 660 651" fill="#e0e8ef">
<path d="M332 62l26 34h-52zM332 606l26-35h-52zM60 334l35-26v52zM604 334l-35-26v52zM256 90l4 18q-55 18-88 52l18 18-54 6 2-44 14 8q40-40 104-58zM410 90l-4 18q52 18 86 52l-18 18 54 6-2-44-14 8q-42-40-102-58z"/>
<path d="M205 240l0-8q50-28 115-40 80 8 142 36l-6 12q26 4 26 16v130l-40 64q-80 20-160 20-60-6-90-26l-8-64V264q0-18 21-24z"/>
<g fill="#fff"><ellipse cx="320" cy="217" rx="26" ry="17"/><ellipse cx="318" cy="381" rx="25" ry="24"/><path d="M200 266q30-28 86-38 12 4 12 30v88q-4 28-20 36-40 20-70 20-8-6-10-30zM354 230q55 2 96 20 10 10 10 26v98q-2 22-14 22-50 2-90-20-20-16-20-40V268q0-26 18-38zM240 436q40-24 90-26 60 2 96 22-60 28-110 34-50-8-76-30zM195 388q24 24 28 56-24-14-28-56zM466 390q6 30-26 44-4-22 26-44z"/></g>
<path d="M205 242q50-26 92-30M345 232q60 4 112 12" stroke="#fff" stroke-width="3" fill="none"/>
<g fill="none" stroke-width="5"><path d="M348 280v206" stroke="#b9b4fb"/><path d="M348 366v44M348 464v22" stroke="#3a33e8"/><path d="M182 447l166 38" stroke="#e33b3b"/><path d="M348 485l136-48" stroke="#25a52f"/></g>
<g font-family="Roboto,sans-serif" stroke-width="1"><text x="139" y="458" fill="#e55" stroke="#e55" font-size="46">X</text><text x="491" y="448" fill="#25a52f" stroke="#25a52f" font-size="46">Y</text><text x="334" y="262" fill="#b9b4fb" font-size="46">Z</text>
<g fill="#333"><text transform="translate(217 340) rotate(-13)" font-size="31">Right</text><text transform="translate(362 320) rotate(9)" font-size="35">Back</text><text transform="translate(394 438) rotate(187)" font-size="28">Bottom</text></g></g>
</svg>
<button class="iso" aria-label="View options"><cad-icon name="cube"></cad-icon><i></i></button>
<div class="side"><button aria-label="Appearance"><cad-icon name="appear"></cad-icon></button><button aria-label="Configurations"><cad-icon name="cfgcube"></cad-icon></button><button aria-label="Properties"><cad-icon name="cfgbrace"></cad-icon></button><button class="vx" aria-label="Variables"><b>(<i>x</i>)</b><svg viewBox="0 0 24 24"><path d="M.5.500h12v9H.500z" fill="#aaa" stroke="#333"/><path d="M4.500 0v9M8.500 0v9M0 3.500h12M0 6.500h12" stroke="#333"/></svg></button></div>
<div class="area">Area:<u>1335.160</u><span>mm<sup>2</sup></span><cad-icon name="tape"></cad-icon><cad-icon name="scale"></cad-icon></div>`);

define('cad-tab',`
:host{display:block;width:243px;height:33px}
button{width:100%;height:100%;justify-content:flex-start;gap:4px;padding-left:14px;background:#ebebeb;border-radius:0 0 5px 5px;box-shadow:0 1px 1px #aaa;color:#555}
:host([on]){height:35px}:host([on]) button{background:#fff;color:#333;border-bottom:4px solid #1651b0;box-shadow:none;padding-top:2px;border-radius:0 0 6px 6px}
`,e=>`<button type="button"><cad-icon name="${e.getAttribute('icon')}"></cad-icon><slot></slot></button>`);
define('cad-tabs',`
:host{display:flex;gap:3px;height:35px;background:#d0d0d0}
.add{width:44px;height:34px;padding-right:4px}`,`
<button class="add" aria-label="Add tab"><cad-icon name="plus"></cad-icon></button>
<cad-tab icon="part" on>Body</cad-tab><cad-tab icon="part">RealParts</cad-tab><cad-tab icon="part">Suspension</cad-tab><cad-tab icon="asm">Assembly 1</cad-tab>`);
define('cad-app',`
:host{display:flex;flex-direction:column;height:100vh}
.body{flex:1;display:flex;min-height:0}
.work{flex:1;display:flex;flex-direction:column;min-width:0}
.mid{flex:1;display:flex;min-height:0}`,`
<cad-header></cad-header>
<div class="body"><cad-rail></cad-rail><div class="work"><cad-toolbar></cad-toolbar><div class="mid"><cad-features></cad-features><cad-canvas></cad-canvas></div><cad-tabs></cad-tabs></div></div>`);
</script>
</body>
</html>
